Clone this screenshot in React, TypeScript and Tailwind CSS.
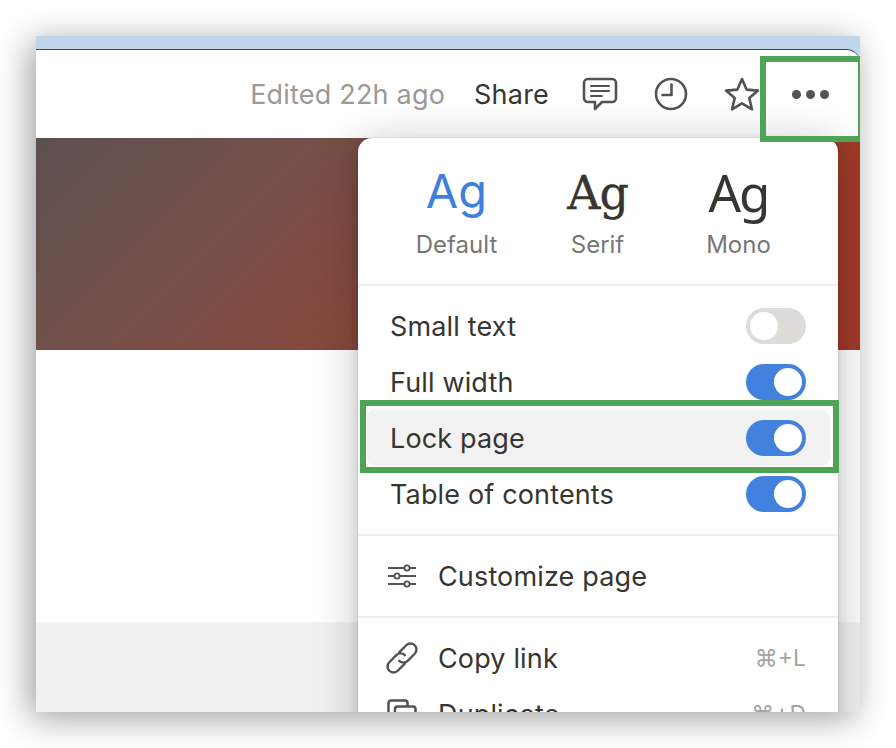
const sans = "font-['Inter',sans-serif]"

function Toggle({ on }: { on: boolean }) {
  return (
    <div className={`flex h-9 w-[60px] items-center rounded-full p-1 ${on ? "justify-end bg-[#4281de]" : "justify-start bg-[#dddcd8]"}`}>
      <div className="h-7 w-7 rounded-full bg-white" />
    </div>
  )
}

function ToggleRow({ label, on, active }: { label: string; on: boolean; active?: boolean }) {
  return (
    <div className={`ml-[9px] mr-2 flex h-14 items-center justify-between rounded-lg pl-[23px] pr-6 ${active ? "bg-[#f2f2f2]" : ""}`}>
      <span className="pt-[2px] text-[27px] tracking-[0.15px] text-[#37352f]">{label}</span>
      <Toggle on={on} />
    </div>
  )
}

function FontOption({ label, sample, font, active }: { label: string; sample: string; font: string; active?: boolean }) {
  return (
    <div className="flex w-[141px] flex-col items-center">
      <span className={`box-border h-[70px] ${font} ${active ? "text-[#3f80de]" : "text-[#37352f]"}`}>{sample}</span>
      <span className="mt-[1px] text-[24px] leading-8 text-[#787774]">{label}</span>
    </div>
  )
}

function ChatIcon() {
  return (
    <svg width="36" height="34" viewBox="0 0 36 34" fill="none" stroke="#55534e" strokeWidth="2.6" strokeLinejoin="round" strokeLinecap="round">
      <path d="M6 2h24a4 4 0 0 1 4 4v15a4 4 0 0 1-4 4H20l-7 7v-7H6a4 4 0 0 1-4-4V6a4 4 0 0 1 4-4z" />
      <path d="M9 9h18M9 14h18M9 19h11" strokeWidth="2" />
    </svg>
  )
}

function ClockIcon() {
  return (
    <svg width="34" height="34" viewBox="0 0 34 34" fill="none" stroke="#55534e" strokeWidth="2.6" strokeLinecap="round" strokeLinejoin="round">
      <circle cx="17" cy="17" r="15" />
      <path d="M17.5 7.5v10.5H8.5" />
    </svg>
  )
}

function StarIcon() {
  return (
    <svg width="36" height="34" viewBox="0 0 36 34" fill="none" stroke="#55534e" strokeWidth="2.6" strokeLinejoin="round">
      <path d="M18 2l4.6 10.6 11.4 1-8.7 7.5 2.7 11.2L18 26.3 8 32.300l2.700-11.200L2 13.600l11.400-1z" />
    </svg>
  )
}

function SlidersIcon() {
  return (
    <svg width="30" height="24" viewBox="0 0 30 24" fill="none" stroke="#55534e">
      <path d="M1 4h16M23 4h6M1 12h6M13 12h16M1 20h16M23 20h6" strokeWidth="2.200" />
      <circle cx="20" cy="4" r="2.600" strokeWidth="1.800" />
      <circle cx="10" cy="12" r="2.600" strokeWidth="1.800" />
      <circle cx="20" cy="20" r="2.600" strokeWidth="1.800" />
    </svg>
  )
}

function LinkIcon() {
  return (
    <svg width="30" height="30" viewBox="0 0 30 30" fill="none" stroke="#55534e" strokeWidth="2.400" strokeLinecap="round" className="overflow-visible">
      <g transform="rotate(-45 15 15)">
        <path d="M13 21H3a6 6 0 0 1 0-12h10a6 6 0 0 1 6 6" />
        <path d="M17 9h10a6 6 0 0 1 0 12H17a6 6 0 0 1-6-6" />
      </g>
    </svg>
  )
}

function DuplicateIcon() {
  return (
    <svg width="30" height="30" viewBox="0 0 30 30" fill="none" stroke="#55534e" strokeWidth="2.500">
      <path d="M8 22H4a2.500 2.500 0 0 1-2.500-2.500V4A2.500 2.500 0 0 1 4 1.500h14A2.500 2.500 0 0 1 20.500 4v3" />
      <rect x="8" y="7.500" width="20.500" height="20.500" rx="2.500" />
    </svg>
  )
}

function MenuRow({ icon, label, shortcut }: { icon: React.ReactNode; label: string; shortcut?: string }) {
  return (
    <div className="flex h-14 items-center pl-[29px] pr-8">
      <div className="flex w-[51px] items-center">{icon}</div>
      <span className="pt-[2px] text-[27px] tracking-[0.15px] text-[#37352f]">{label}</span>
      {shortcut && <span className="ml-auto text-[23px] text-[#a5a4a1]">{shortcut}</span>}
    </div>
  )
}

export default function App() {
  return (
    <div className={`h-[748px] w-[896px] overflow-hidden bg-white pl-9 pt-9 ${sans}`}>
      <div className="relative flex h-[676px] w-[824px] flex-col overflow-hidden bg-[#c0d4ea] shadow-[-6px_6px_32px_rgba(0,0,0,0.38)]">
        {/* browser strip */}
        <div className="h-[13px] shrink-0" />

        {/* topbar */}
        <div className="flex h-[89px] shrink-0 items-center rounded-tr-[14px] border-t border-[#3d4856] bg-white pr-[31px]">
          <span className="ml-auto pt-[2px] text-[27px] tracking-[0.2px] text-[#9b9a97]">Edited 22h ago</span>
          <span className="ml-[29px] pt-[2px] text-[27px] tracking-[0.2px] text-[#37352f]">Share</span>
          <div className="ml-[33px]"><ChatIcon /></div>
          <div className="ml-[36px]"><ClockIcon /></div>
          <div className="ml-[36px]"><StarIcon /></div>
          <div className="ml-[32px] flex gap-[5px]">
            <div className="h-[9px] w-[9px] rounded-full bg-[#55534e]" />
            <div className="h-[9px] w-[9px] rounded-full bg-[#55534e]" />
            <div className="h-[9px] w-[9px] rounded-full bg-[#55534e]" />
          </div>
        </div>

        {/* cover */}
        <div className="h-[212px] shrink-0 bg-[linear-gradient(135deg,#5c5150_0%,#74504a_25%,#8a473b_52%,#a03a28_80%)]" />
        <div className="h-[272px] shrink-0 bg-white" />
        <div className="flex-1 bg-[#f1f1ef]" />

        {/* page options menu */}
        <div className="absolute left-[322px] top-[102px] w-[480px] rounded-t-[14px] bg-white shadow-[0_0_0_1px_rgba(15,15,15,0.04),0_4px_10px_rgba(15,15,15,0.1),0_6px_44px_rgba(15,15,15,0.26)]">
          <div className="flex h-[146px] pl-7 pt-5">
            <FontOption label="Default" sample="Ag" font="pt-px text-[47px] leading-[64px] font-['Inter',sans-serif]" active />
            <FontOption label="Serif" sample="Ag" font="pt-[2px] text-[46px] leading-[66px] tracking-[-1px] [-webkit-text-stroke:0.4px] font-['DejaVu_Serif',serif]" />
            <FontOption label="Mono" sample="Ag" font="pt-[2px] text-[51px] leading-[64px] tracking-[-2px] font-['Noto_Sans',sans-serif]" />
          </div>
          <div className="h-[2px] bg-[#ededec]" />
          <div className="py-[12px]">
            <ToggleRow label="Small text" on={false} />
            <ToggleRow label="Full width" on />
            <ToggleRow label="Lock page" on active />
            <ToggleRow label="Table of contents" on />
          </div>
          <div className="h-[2px] bg-[#ededec]" />
          <div className="py-3">
            <MenuRow icon={<SlidersIcon />} label="Customize page" />
          </div>
          <div className="h-[2px] bg-[#ededec]" />
          <div className="py-3">
            <MenuRow icon={<LinkIcon />} label="Copy link" shortcut="⌘+L" />
            <MenuRow icon={<DuplicateIcon />} label="Duplicate" shortcut="⌘+D" />
          </div>
        </div>

        {/* green highlights */}
        <div className="absolute left-[724px] top-5 h-[86px] w-[104px] border-[6px] border-[#4ea355]" />
        <div className="absolute left-[324px] top-[364px] h-[73px] w-[479px] border-[6px] border-[#4ea355]" />
      </div>
    </div>
  )
}
